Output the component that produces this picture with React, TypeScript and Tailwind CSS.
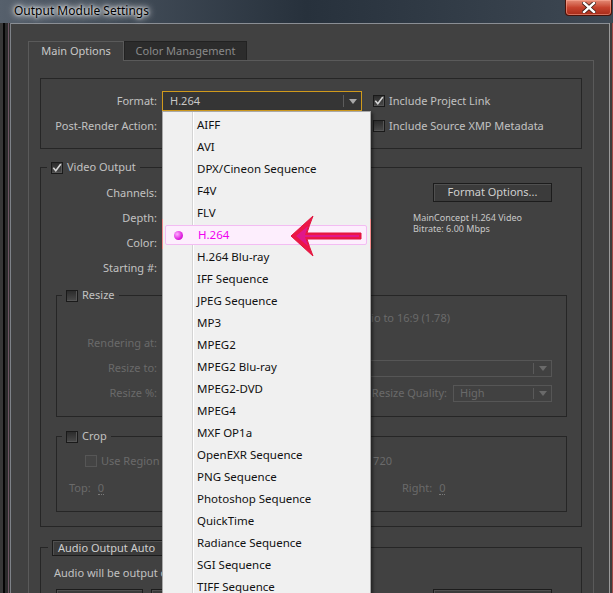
import React from 'react';

const ITEMS = [
  'AIFF',
  'AVI',
  'DPX/Cineon Sequence',
  'F4V',
  'FLV',
  'H.264',
  'H.264 Blu-ray',
  'IFF Sequence',
  'JPEG Sequence',
  'MP3',
  'MPEG2',
  'MPEG2 Blu-ray',
  'MPEG2-DVD',
  'MPEG4',
  'MXF OP1a',
  'OpenEXR Sequence',
  'PNG Sequence',
  'Photoshop Sequence',
  'QuickTime',
  'Radiance Sequence',
  'SGI Sequence',
  'TIFF Sequence',
  'Targa Sequence',
  'WAV',
  'Windows Media',
];

function Check({ checked, disabled }: { checked?: boolean; disabled?: boolean }) {
  return (
    <span
      className={
        disabled
          ? 'flex h-[12px] w-[12px] shrink-0 items-center justify-center border border-[#565656] bg-[#444444]'
          : 'flex h-[12px] w-[12px] shrink-0 items-center justify-center border border-[#1a1a1a] bg-gradient-to-b from-[#2c2c2c] to-[#4a4a4a] shadow-[inset_-1px_-1px_0_#555555]'
      }
    >
      {checked && (
        <svg width="10" height="10" viewBox="0 0 10 10">
          <path d="M1.3 4.8 L3.8 7.8 L8.8 1" fill="none" stroke="#d6d6d6" strokeWidth="1.6" />
        </svg>
      )}
    </span>
  );
}

function Tri({ color }: { color: string }) {
  return (
    <span
      className="h-0 w-0 border-x-[4px] border-t-[5px] border-x-transparent"
      style={{ borderTopColor: color }}
    />
  );
}

function DarkSelect({ className, text }: { className: string; text?: string }) {
  return (
    <div className={'flex items-center border border-[#565656] bg-[#414141] ' + className}>
      <span className="flex-1 pl-[6px] text-[#6a6a6a]">{text}</span>
      <span className="h-[11px] w-px bg-[#5a5a5a]" />
      <span className="flex w-[17px] justify-center">
        <Tri color="#6a6a6a" />
      </span>
    </div>
  );
}

function DarkButton({ className, children }: { className: string; children?: React.ReactNode }) {
  return (
    <div
      className={
        'flex items-center border border-[#1c1c1c] bg-[#3b3b3b] text-[#cfcfcf] shadow-[inset_1px_1px_0_#505050] ' +
        className
      }
    >
      {children}
    </div>
  );
}

function Legend({ className, children }: { className: string; children: React.ReactNode }) {
  return <div className={'-mt-[8px] flex w-fit items-center bg-[#414141] px-[4px] ' + className}>{children}</div>;
}

export default function App() {
  return (
    <div className="flex h-[593px] w-[613px] flex-col overflow-hidden bg-[#2a2a2a] font-['Noto_Sans',sans-serif] text-[11px] text-[#c2c2c2]">
      {/* title bar */}
      <div className="relative flex h-[23px] shrink-0 items-center bg-gradient-to-r from-[#56606c] via-[#27313c] to-[#3e4853]">
        <span className="ml-[14px] -mt-[2px] text-[12px] text-black [text-shadow:0_0_8px_rgba(255,255,255,1),0_0_6px_rgba(255,255,255,1),0_0_3px_rgba(255,255,255,1)]">
          Output Module Settings
        </span>
        <div className="absolute right-[1px] top-0 flex h-[16px] w-[47px] items-center justify-center rounded-b-[4px] border border-t-0 border-[#4a1208] bg-gradient-to-b from-[#e48a76] via-[#c6432e] to-[#a62a18] shadow-[inset_0_0_0_1px_rgba(255,180,160,0.5)]">
          <svg width="14" height="11" viewBox="0 0 14 11">
            <path d="M2 1 L12 10 M12 1 L2 10" stroke="#3a1a14" strokeWidth="4" strokeLinecap="square" />
            <path d="M2 1 L12 10 M12 1 L2 10" stroke="#ffffff" strokeWidth="2.4" strokeLinecap="square" />
          </svg>
        </div>
      </div>

      <div className="flex flex-1">
        {/* left frame */}
        <div className="flex w-[11px] shrink-0">
          <div className="w-[3px] bg-[#383838]" />
          <div className="w-[2px] bg-[#050505]" />
          <div className="w-[3px] bg-[#2b2b2b]" />
          <div className="w-px bg-[#6e5664]" />
          <div className="w-px bg-[#303030]" />
          <div className="w-px bg-[#7e8288]" />
        </div>

        {/* body */}
        <div className="flex flex-1 flex-col border-t border-[#8a8e94] bg-[#414141] pl-[17px] pr-[15px] pt-[17px]">
          {/* tabs */}
          <div className="flex h-[19px] items-end">
            <div className="relative z-10 -mb-px flex h-[20px] w-[96px] items-center justify-center border border-b-0 border-[#5a5a5a] bg-[#414141] text-[#c8c8c8]">
              Main Options
            </div>
            <div className="flex h-[19px] w-[123px] items-center justify-center border border-b-0 border-[#222222] bg-[#2c2c2c] text-[#8a8a8a]">
              Color Management
            </div>
          </div>

          {/* panel */}
          <div className="flex-1 border-x border-t border-[#5a5a5a] px-[11px] pt-[17px]">
            {/* format group */}
            <div className="flex border border-[#262626] py-[12px]">
              <div className="flex w-[116px] flex-col gap-[5px] text-right">
                <div className="h-[20px] leading-[20px]">Format:</div>
                <div className="h-[20px] leading-[20px]">Post-Render Action:</div>
              </div>
              <div className="ml-[5px] flex flex-col gap-[5px]">
                <div className="relative">
                  <div className="flex h-[20px] w-[200px] items-center border border-[#d09a1c] bg-[#353535] text-[#c8c8c8]">
                    <span className="flex-1 pl-[7px]">H.264</span>
                    <span className="h-[12px] w-px bg-[#5c5c5c]" />
                    <span className="flex w-[17px] justify-center">
                      <Tri color="#a8a8a8" />
                    </span>
                  </div>

                  {/* dropdown list */}
                  <div className="absolute left-0 top-full z-20 w-[209px] border border-[#a8a8a8] bg-[#f0f0f0] pt-[2px] font-['Noto_Sans',sans-serif] text-[11.5px] text-[#111111] shadow-[2px_2px_3px_rgba(0,0,0,0.45)]">
                    <div className="absolute bottom-0 left-[29px] top-0 w-px bg-[#d4d4d4]" />
                    <div className="absolute bottom-0 left-[30px] top-0 w-px bg-white" />
                    <div className="absolute -left-px top-[107px] h-[30px] w-px bg-[#f08a8a]" />
                    <div className="absolute -right-px top-[107px] h-[30px] w-px bg-[#f08a8a]" />
                    {ITEMS.map((it) =>
                      it === 'H.264' ? (
                        <div key={it} className="relative h-[22px] py-px pl-[2px] pr-[3px]">
                          <div className="relative flex h-full items-center rounded-[2px] border border-[#f3bcf3] bg-[#fdeefd]">
                            <span className="ml-[8px] h-[9px] w-[9px] rounded-full bg-[radial-gradient(circle_at_35%_35%,#ffb0ff,#e020e0_60%,#b000b0)]" />
                            <span className="ml-[15px] text-[#f000f0]">{it}</span>
                          </div>
                        </div>
                      ) : (
                        <div key={it} className="relative flex h-[22px] items-center pl-[34px]">
                          {it}
                        </div>
                      ),
                    )}
                    {/* annotation arrow */}
                    <svg
                      className="absolute left-[126px] top-[101px]"
                      width="76"
                      height="46"
                      viewBox="0 0 76 46"
                    >
                      <path
                        d="M2 23 L24 3 Q20 13 18 20 L72 20 L72 26 L18 26 Q20 33 24 43 Z"
                        fill="#ec1846"
                        stroke="#e0153e"
                        strokeWidth="1"
                        strokeLinejoin="round"
                      />
                      <path d="M7 23 L19 13 Q17 19 16 22 L70 22 L70 24 L16 24 Q17 27 19 33 Z" fill="#e0178a" />
                    </svg>
                  </div>
                </div>
                <div className="h-[20px]" />
              </div>
              <div className="ml-[11px] flex flex-col gap-[5px]">
                <div className="flex h-[20px] items-center gap-[4px]">
                  <Check checked />
                  <span>Include Project Link</span>
                </div>
                <div className="flex h-[20px] items-center gap-[4px]">
                  <Check />
                  <span>Include Source XMP Metadata</span>
                </div>
              </div>
            </div>

            {/* video output group */}
            <div className="mt-[18px] border border-[#262626] pb-[14px]">
              <Legend className="ml-[6px] h-[15px] gap-[4px]">
                <Check checked />
                <span>Video Output</span>
              </Legend>
              <div className="mt-[5px] flex">
                <div className="flex w-[116px] flex-col text-right">
                  <div className="h-[25px] leading-[25px]">Channels:</div>
                  <div className="h-[25px] leading-[25px]">Depth:</div>
                  <div className="h-[25px] leading-[25px]">Color:</div>
                  <div className="h-[25px] leading-[25px]">Starting #:</div>
                </div>
                <div className="ml-auto mr-[29px] flex w-[139px] flex-col pt-[3px]">
                  <DarkButton className="ml-auto h-[19px] w-[119px] justify-center">Format Options...</DarkButton>
                  <div className="mt-[10px] text-[9px] leading-[11px] text-[#c8c8c8]">
                    <div>MainConcept H.264 Video</div>
                    <div>Bitrate: 6.00 Mbps</div>
                  </div>
                </div>
              </div>

              {/* resize */}
              <div className="ml-[15px] mr-[14px] mt-[15px] border border-[#262626] pb-[10px]">
                <Legend className="ml-[5px] h-[15px] gap-[4px]">
                  <Check />
                  <span>Resize</span>
                </Legend>
                <div className="mt-[3px] flex flex-col text-[#6a6a6a]">
                  <div className="flex h-[25px] items-center justify-end pr-[116px]">
                    Lock Aspect Ratio to 16:9 (1.78)
                  </div>
                  <div className="flex h-[25px] items-center">
                    <div className="w-[100px] text-right">Rendering at:</div>
                  </div>
                  <div className="flex h-[25px] items-center">
                    <div className="w-[100px] text-right">Resize to:</div>
                    <DarkSelect className="ml-[6px] mr-[14px] h-[17px] flex-1" text="Custom" />
                  </div>
                  <div className="flex h-[25px] items-center">
                    <div className="w-[100px] text-right">Resize %:</div>
                    <div className="ml-auto">Resize Quality:</div>
                    <DarkSelect className="ml-[6px] mr-[14px] h-[17px] w-[99px]" text="High" />
                  </div>
                </div>
              </div>

              {/* crop */}
              <div className="ml-[15px] mr-[14px] mt-[19px] border border-[#262626] pb-[13px]">
                <Legend className="ml-[5px] h-[15px] gap-[4px]">
                  <Check />
                  <span>Crop</span>
                </Legend>
                <div className="mt-[7px] flex h-[20px] items-center pl-[28px] text-[#6a6a6a]">
                  <Check disabled />
                  <span className="ml-[4px]">Use Region of Interest</span>
                  <span className="ml-auto pr-[174px]">Final Size: 1280 x 720</span>
                </div>
                <div className="mt-[7px] flex h-[20px] items-center pl-[12px] text-[#6a6a6a]">
                  {['Top:', 'Left:', 'Bottom:', 'Right:'].map((l) => (
                    <div key={l} className="flex w-[111px] items-center gap-[7px]">
                      <span>{l}</span>
                      <span className="border-b border-dotted border-[#7a7a7a] leading-[12px]">0</span>
                    </div>
                  ))}
                </div>
              </div>
            </div>

            {/* audio group */}
            <div className="mt-[20px] border border-[#262626]">
              <Legend className="ml-[7px] h-[16px]">
                <DarkButton className="h-[16px] w-[150px] pl-[5px]">Audio Output Auto</DarkButton>
              </Legend>
              <div className="mt-[9px] h-[15px] pl-[13px] leading-[15px]">Audio will be output only if the composition has audio.</div>
              <div className="mt-[9px] flex h-[18px]">
                <DarkButton className="ml-[15px] h-[18px] w-[87px]" />
                <DarkButton className="ml-[8px] h-[18px] w-[120px]" />
                <DarkButton className="ml-auto mr-[29px] h-[18px] w-[119px]" />
              </div>
            </div>
          </div>
        </div>

        {/* right frame */}
        <div className="flex w-[4px] shrink-0">
          <div className="w-px bg-[#9a9a9a]" />
          <div className="w-[2px] bg-[#3c3c3c]" />
          <div className="w-px bg-[#a04848]" />
        </div>
      </div>
    </div>
  );
}
